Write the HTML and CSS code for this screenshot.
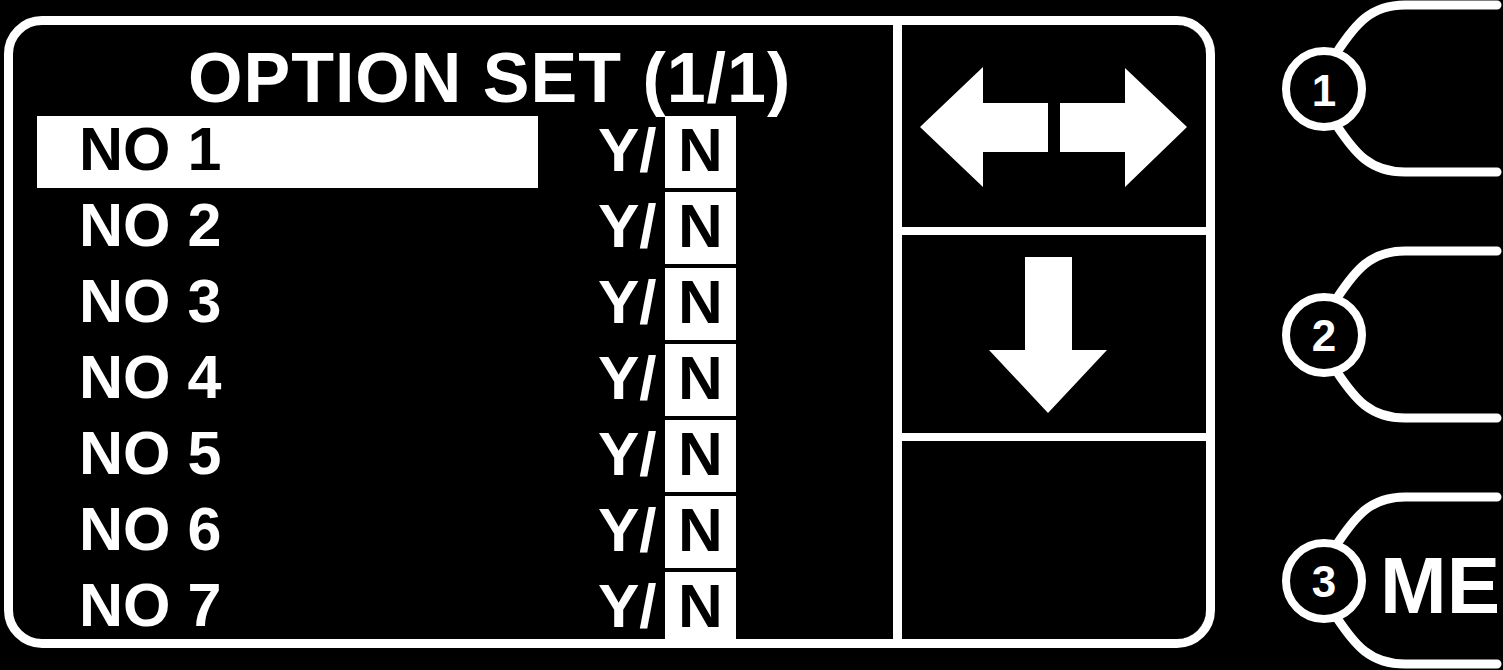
FILE: index.html
```html
<!DOCTYPE html>
<html lang="en">
<head>
    <meta charset="UTF-8">
    <title>Option Set</title>
    <link rel="stylesheet" href="styles.css">
</head>
<body>
    <div class="panel">
        <div class="list">
            <div class="title">OPTION SET (1/1)</div>
            <div class="rows">
                <div class="row"><span class="label active">NO 1</span><span class="yes">Y/</span><span class="no">N</span></div>
                <div class="row"><span class="label">NO 2</span><span class="yes">Y/</span><span class="no">N</span></div>
                <div class="row"><span class="label">NO 3</span><span class="yes">Y/</span><span class="no">N</span></div>
                <div class="row"><span class="label">NO 4</span><span class="yes">Y/</span><span class="no">N</span></div>
                <div class="row"><span class="label">NO 5</span><span class="yes">Y/</span><span class="no">N</span></div>
                <div class="row"><span class="label">NO 6</span><span class="yes">Y/</span><span class="no">N</span></div>
                <div class="row"><span class="label">NO 7</span><span class="yes">Y/</span><span class="no">N</span></div>
            </div>
        </div>
        <div class="keys">
            <div class="key">
                <svg class="key-icon" width="304" height="202" viewBox="0 0 304 202">
                    <polygon points="18,102 81,42 81,78 146,78 146,127 81,127 81,162" fill="#fff"/>
                    <polygon points="158,78 223,78 223,43 285,102 223,162 223,127 158,127" fill="#fff"/>
                </svg>
            </div>
            <div class="key">
                <svg class="key-icon" width="304" height="198" viewBox="0 0 304 198">
                    <polygon points="123,22 170,22 170,115 205,115 146,178 87,115 123,115" fill="#fff"/>
                </svg>
            </div>
            <div class="key"></div>
        </div>
    </div>

    <div class="buttons">
        <svg class="btn" width="288" height="180" viewBox="0 0 288 180">
            <path d="M122,52 C140,25 155,5 190,5 L282,5 M122,126 C140,153 155,172 190,172 L282,172" class="btn-line"/>
            <circle cx="109" cy="89" r="38" class="btn-ring"/>
            <text x="109" y="106" class="btn-num">1</text>
        </svg>
        <svg class="btn" width="288" height="180" viewBox="0 0 288 180">
            <path d="M122,52 C140,25 155,5 190,5 L282,5 M122,126 C140,153 155,172 190,172 L282,172" class="btn-line"/>
            <circle cx="109" cy="89" r="38" class="btn-ring"/>
            <text x="109" y="105" class="btn-num">2</text>
        </svg>
        <svg class="btn" width="288" height="180" viewBox="0 0 288 180">
            <path d="M122,52 C140,25 155,5 190,5 L282,5 M122,126 C140,153 155,172 190,172 L282,172" class="btn-line"/>
            <circle cx="109" cy="89" r="38" class="btn-ring"/>
            <text x="109" y="105" class="btn-num">3</text>
            <text x="165" y="121" class="btn-word">ME</text>
        </svg>
    </div>
</body>
</html>
```

FILE: styles.css
```css
body {
    margin: 0;
    height: 670px;
    overflow: hidden;
    display: flex;
    align-items: flex-start;
    background: #000;
    color: #fff;
    font-family: "Liberation Sans", Arial, sans-serif;
    font-weight: bold;
}
.panel {
    box-sizing: border-box;
    width: 1211px;
    height: 632px;
    margin: 16px 0 0 4px;
    border: 9px solid #fff;
    border-radius: 38px;
    overflow: hidden;
    display: grid;
    grid-template-columns: 889px 1fr;
}
.list {
    border-right: 9px solid #fff;
    padding-top: 15px;
    overflow: hidden;
}
.title {
    font-size: 70px;
    line-height: 76px;
    padding-left: 175px;
    letter-spacing: 1px;
    white-space: nowrap;
}
.rows {
    display: flex;
    flex-direction: column;
    gap: 4px;
}
.row {
    display: flex;
    height: 72px;
}
.label {
    box-sizing: border-box;
    width: 501px;
    height: 72px;
    margin-left: 24px;
    padding-left: 42px;
    font-size: 61px;
    line-height: 66px;
}
.label.active {
    background: #fff;
    color: #000;
}
.yes {
    width: 67px;
    margin-left: 60px;
    font-size: 62px;
    line-height: 68px;
}
.no {
    width: 71px;
    height: 72px;
    background: #fff;
    color: #000;
    text-align: center;
    font-size: 62px;
    line-height: 68px;
}
.keys {
    display: grid;
    grid-template-rows: 202px 198px 1fr;
    gap: 8px;
    background: #fff;
}
.key {
    background: #000;
}
.key-icon {
    display: block;
}
.buttons {
    display: flex;
    flex-direction: column;
    gap: 66px;
}
.btn {
    display: block;
}
.btn-line {
    fill: none;
    stroke: #fff;
    stroke-width: 9;
    stroke-linecap: round;
}
.btn-ring {
    fill: #000;
    stroke: #fff;
    stroke-width: 8;
}
.btn-num {
    fill: #fff;
    font-size: 44px;
    font-weight: bold;
    text-anchor: middle;
}
.btn-word {
    fill: #fff;
    font-size: 80px;
    font-weight: bold;
}
```
